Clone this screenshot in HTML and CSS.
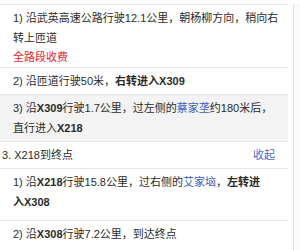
FILE: index.html
```html
<!DOCTYPE html>
<html lang="zh-CN">
<head>
    <meta charset="UTF-8">
    <title>路线详情</title>
    <link rel="stylesheet" href="styles.css">
</head>
<body>
    <div class="page">
        <div class="route">
            <div class="step first">
                1) 沿武英高速公路行驶12.1公里，朝杨柳方向，稍向右转上匝道
                <div class="toll">全路段收费</div>
            </div>
            <div class="step">2) 沿匝道行驶50米，<b>右转进入X309</b></div>
            <div class="step active">3) 沿<b>X309</b>行驶1.7公里，过左侧的<span class="poi">蔡家垄</span>约180米后，直行进入<b>X218</b></div>

            <div class="section">
                <span>3. X218到终点</span>
                <span class="toggle">收起</span>
            </div>
            <div class="step spaced">1) 沿<b>X218</b>行驶15.8公里，过右侧的<span class="poi">艾家垴</span>，<b>左转进<span class="keep">入X308</span></b></div>
            <div class="step">2) 沿<b>X308</b>行驶7.2公里，到达终点</div>
        </div>
        <div class="side"></div>
    </div>
</body>
</html>
```

FILE: styles.css
```css
* {
    margin: 0;
    padding: 0;
    box-sizing: border-box;
}

body {
    font-family: "Liberation Sans", "Noto Sans CJK SC", sans-serif;
    font-size: 11px;
    color: #2b2b2b;
    background: #fff;
}

.page {
    display: flex;
    height: 250px;
    overflow: hidden;
    padding-top: 4px;
}

.route {
    width: 288px;
    flex-shrink: 0;
}

.side {
    flex: 1;
    margin-left: 5px;
    border-left: 1px solid #e2e2e2;
    background: #fafafa;
}

.step {
    padding: 3px 8px 3px 13px;
    line-height: 20px;
    border-top: 1px solid #e6e6e6;
}

.step.first {
    padding-bottom: 1px;
}

.step.spaced {
    padding-bottom: 8px;
}

.step.active {
    background: #f3f3f3;
}

.toll {
    color: #e3262b;
    line-height: 18px;
}

.poi {
    color: #3d5fc4;
}

.keep {
    white-space: nowrap;
}

b {
    font-weight: bold;
}

.section {
    display: flex;
    justify-content: space-between;
    padding: 3px 13px 3px 2px;
    line-height: 20px;
    border-top: 1px solid #e6e6e6;
}

.toggle {
    color: #4a68cc;
}
```
